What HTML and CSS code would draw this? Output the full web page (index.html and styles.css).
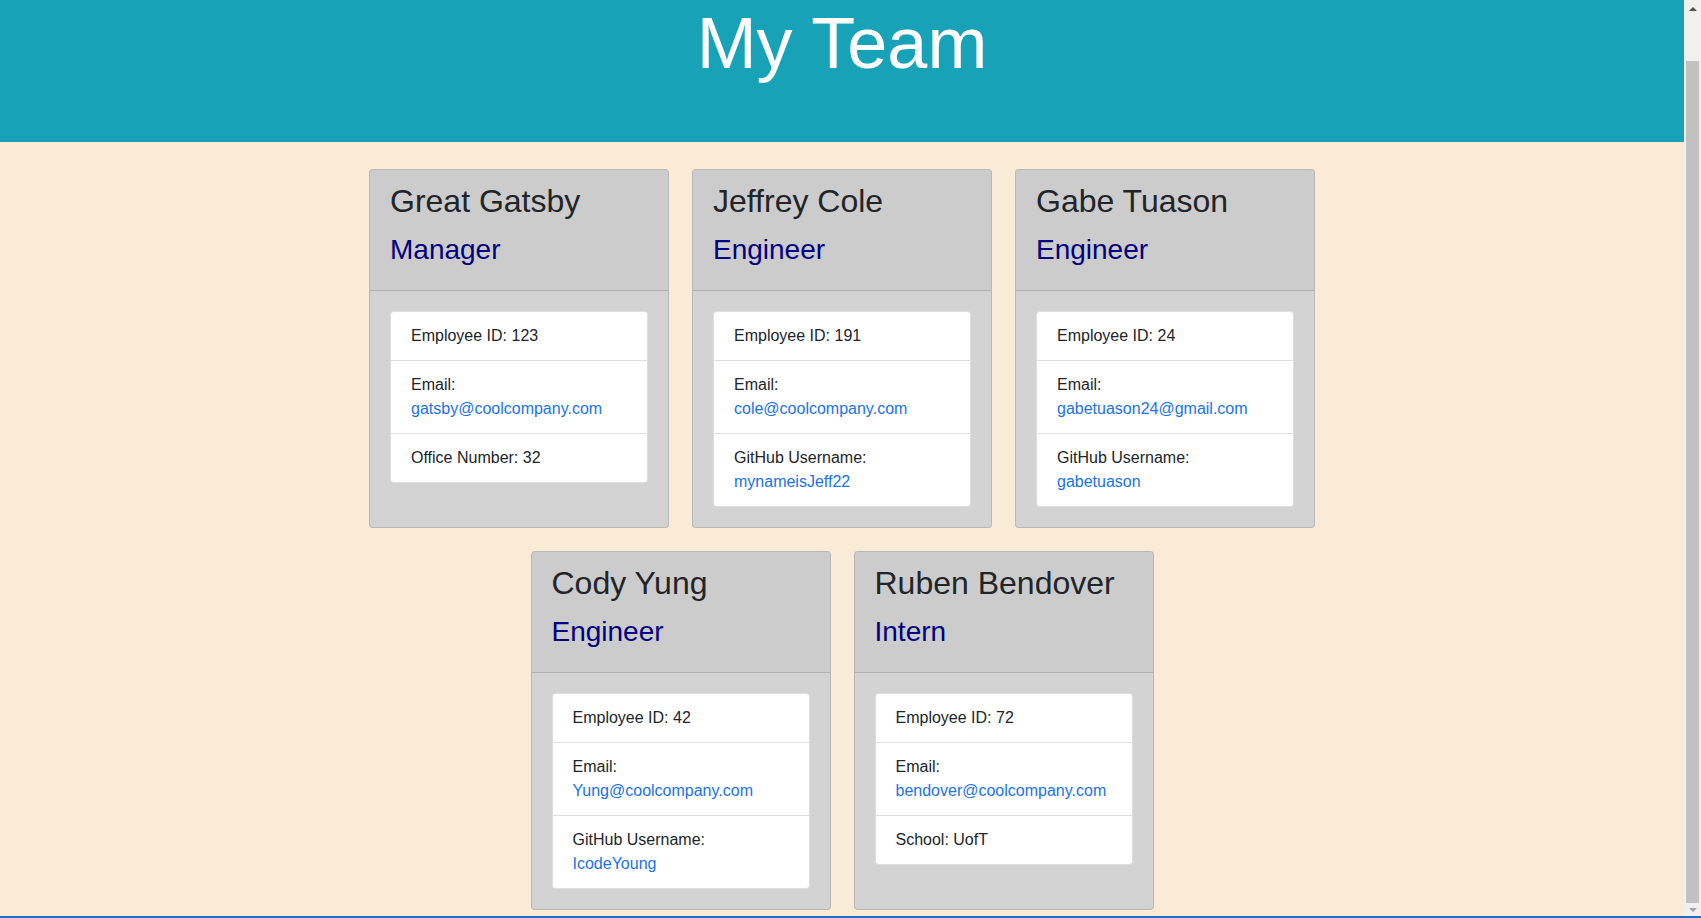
FILE: index.html
```html
<!DOCTYPE html>
<html lang="en">
<head>
<meta charset="utf-8">
<title>My Team</title>
<link rel="stylesheet" href="styles.css">
</head>
<body>
<div class="window">
  <div class="page">
    <header class="hero">
      <h1 class="hero-title">My Team</h1>
    </header>
    <main class="team">
      <div class="card">
        <div class="card-header">
          <h2 class="card-name">Great Gatsby</h2>
          <h3 class="card-role">Manager</h3>
        </div>
        <div class="card-body">
          <ul class="list">
            <li class="list-item">Employee ID: 123</li>
            <li class="list-item">Email:<br><a class="link" href="#">gatsby@coolcompany.com</a></li>
            <li class="list-item">Office Number: 32</li>
          </ul>
        </div>
      </div>
      <div class="card">
        <div class="card-header">
          <h2 class="card-name">Jeffrey Cole</h2>
          <h3 class="card-role">Engineer</h3>
        </div>
        <div class="card-body">
          <ul class="list">
            <li class="list-item">Employee ID: 191</li>
            <li class="list-item">Email:<br><a class="link" href="#">cole@coolcompany.com</a></li>
            <li class="list-item">GitHub Username:<br><a class="link" href="#">mynameisJeff22</a></li>
          </ul>
        </div>
      </div>
      <div class="card">
        <div class="card-header">
          <h2 class="card-name">Gabe Tuason</h2>
          <h3 class="card-role">Engineer</h3>
        </div>
        <div class="card-body">
          <ul class="list">
            <li class="list-item">Employee ID: 24</li>
            <li class="list-item">Email:<br><a class="link" href="#">gabetuason24@gmail.com</a></li>
            <li class="list-item">GitHub Username:<br><a class="link" href="#">gabetuason</a></li>
          </ul>
        </div>
      </div>
      <div class="card">
        <div class="card-header">
          <h2 class="card-name">Cody Yung</h2>
          <h3 class="card-role">Engineer</h3>
        </div>
        <div class="card-body">
          <ul class="list">
            <li class="list-item">Employee ID: 42</li>
            <li class="list-item">Email:<br><a class="link" href="#">Yung@coolcompany.com</a></li>
            <li class="list-item">GitHub Username:<br><a class="link" href="#">IcodeYoung</a></li>
          </ul>
        </div>
      </div>
      <div class="card">
        <div class="card-header">
          <h2 class="card-name">Ruben Bendover</h2>
          <h3 class="card-role">Intern</h3>
        </div>
        <div class="card-body">
          <ul class="list">
            <li class="list-item">Employee ID: 72</li>
            <li class="list-item">Email:<br><a class="link" href="#">bendover@coolcompany.com</a></li>
            <li class="list-item">School: UofT</li>
          </ul>
        </div>
      </div>
    </main>
  </div>
  <div class="scrollbar">
    <div class="sb-btn sb-up"><span class="tri-up"></span></div>
    <div class="sb-track">
      <div class="sb-thumb"></div>
    </div>
    <div class="sb-btn sb-down"><span class="tri-down"></span></div>
  </div>
</div>
<div class="taskbar-edge"></div>
</body>
</html>
```
FILE: styles.css
```css
html, body {
  margin: 0;
  padding: 0;
  height: 918px;
  overflow: hidden;
}
body {
  display: flex;
  flex-direction: column;
  font-family: "Liberation Sans", Arial, sans-serif;
  font-size: 16px;
  line-height: 1.5;
  color: #212529;
}
.window {
  flex: 1;
  display: flex;
  min-height: 0;
}
.page {
  flex: 1;
  background: #faebd7;
  overflow: hidden;
}
.hero {
  height: 142px;
  background: #17a2b8;
  text-align: center;
}
.hero-title {
  margin: 0;
  font-size: 72px;
  font-weight: 300;
  line-height: 1.2;
  color: #ffffff;
}
.team {
  width: 946px;
  margin: 27px auto 0;
  display: flex;
  flex-wrap: wrap;
  justify-content: center;
  column-gap: 23px;
  row-gap: 23px;
}
.card {
  width: 300px;
  box-sizing: border-box;
  border: 1px solid rgba(0, 0, 0, 0.125);
  border-radius: 4px;
  background: #d3d3d3;
  display: flex;
  flex-direction: column;
  overflow: hidden;
}
.card-header {
  background: #cccccc;
  padding: 12px 20px;
  border-bottom: 1px solid rgba(0, 0, 0, 0.125);
}
.card-name {
  margin: 0 0 12.5px;
  font-size: 32px;
  font-weight: 500;
  line-height: 1.2;
  color: #212529;
}
.card-role {
  margin: 0 0 11.5px;
  font-size: 28px;
  font-weight: 500;
  line-height: 1.2;
  color: #000080;
}
.card-body {
  padding: 20px;
}
.list {
  list-style: none;
  margin: 0;
  padding: 0;
  background: #ffffff;
  border: 1px solid rgba(0, 0, 0, 0.125);
  border-radius: 4px;
}
.list-item {
  padding: 12px 20px;
  border-top: 1px solid rgba(0, 0, 0, 0.125);
}
.list-item:first-child {
  border-top: none;
}
.link {
  color: #1a73e8;
  text-decoration: none;
}
.scrollbar {
  width: 17px;
  background: #f0f0f0;
  display: flex;
  flex-direction: column;
}
.sb-btn {
  display: flex;
  align-items: center;
  justify-content: center;
}
.sb-up {
  height: 17px;
}
.sb-down {
  height: 13px;
}
.tri-up {
  width: 0;
  height: 0;
  border-left: 4px solid transparent;
  border-right: 4px solid transparent;
  border-bottom: 4px solid #505050;
}
.tri-down {
  width: 0;
  height: 0;
  border-left: 4px solid transparent;
  border-right: 4px solid transparent;
  border-top: 4px solid #a3a3a3;
}
.sb-track {
  flex: 1;
  display: flex;
  flex-direction: column;
  padding-top: 44px;
}
.sb-thumb {
  flex: 1;
  margin: 0 2px;
  background: #c1c1c1;
}
.taskbar-edge {
  height: 2px;
  background: #1a6fc4;
}
```
